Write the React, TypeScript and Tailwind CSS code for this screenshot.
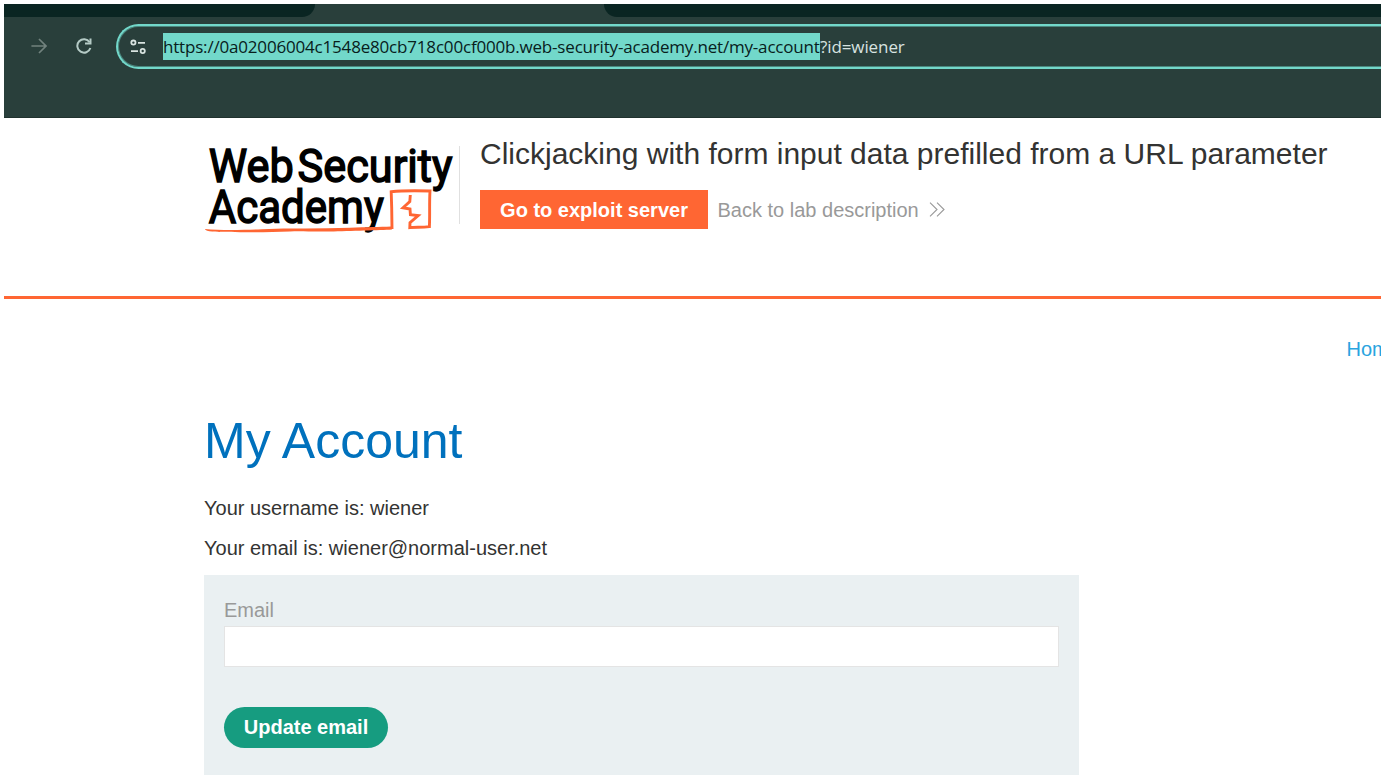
import React from "react";

function ArrowRight() {
  return (
    <svg width="16" height="16" viewBox="0 0 16 16" fill="none" stroke="#71827e" strokeWidth="1.7">
      <path d="M0.4 8H14.5M8 1L15 8L8 15" />
    </svg>
  );
}

function Reload() {
  return (
    <svg width="16" height="16" viewBox="0 0 16 16" fill="none" stroke="#b5cbc6" strokeWidth="2">
      <path d="M13.6 4.2A6.7 6.7 0 1 0 14.4 10" />
      <path d="M14.5 0.5V5.6H9" />
    </svg>
  );
}

function SiteSettings() {
  return (
    <svg width="16" height="16" viewBox="0 0 16 16" fill="none" stroke="#d8e3e0" strokeWidth="1.8">
      <circle cx="3.4" cy="3.6" r="2.1" />
      <path d="M8 3.8H15M1 12.2H8" />
      <circle cx="12.7" cy="12" r="2.1" />
    </svg>
  );
}

function Logo() {
  return (
    <svg width="256" height="96" viewBox="200 142 256 96" className="block overflow-visible">
      <g fill="#000" stroke="#000" strokeWidth="1.5" fontFamily="Roboto, sans-serif" fontWeight="400" fontSize="46">
        <text x="208.8" y="181.8" textLength="85" lengthAdjust="spacingAndGlyphs">Web</text>
        <text x="297.5" y="181.8" textLength="155" lengthAdjust="spacingAndGlyphs">Security</text>
        <text x="208.8" y="223" textLength="175" lengthAdjust="spacingAndGlyphs">Academy</text>
      </g>
      <path
        d="M204.8 229C220 230.4 245 230 262 229.2C290 228 320 229 350 227.8C366 227.2 380 227 391 226.6L392 229.4C380 230.2 350 230.8 330 231.4C312 232 304 230.8 290 231.4C262 232.6 225 232.4 212 231.6C208 231.2 205.6 230.4 204.8 229Z"
        fill="#ff6633"
      />
      <path
        d="M392 229L391.7 208L391.2 191.7C404 190.4 416 190.6 430 191C429.2 204 430 214 429.4 226.6C421 227.6 415 226.8 409.8 227.6L410 222.6L418.2 215.6L410.4 214.6L410 209L403 207.8L409.8 201.5L410.3 195"
        fill="none"
        stroke="#ff6633"
        strokeWidth="2.9"
      />
    </svg>
  );
}

function BrowserBar() {
  return (
    <div className="flex h-[114px] flex-none flex-col overflow-hidden border-b border-[#20322e] bg-[#293f3b]">
      <div className="flex h-[13px] flex-none justify-between">
        <div className="w-[311px] rounded-br-[15px] bg-[#0a2522]" />
        <div className="w-[777px] rounded-bl-[15px] bg-[#0a2522]" />
      </div>
      <div className="mt-[7px] flex h-[45px] items-center pl-[27px]">
        <div className="-mt-px flex w-[85px] items-center gap-[29px]">
          <ArrowRight />
          <Reload />
        </div>
        <div className="-mr-1 flex h-[45px] flex-1 items-center rounded-l-full border-y-2 border-l-2 border-[#72d8ca] pl-[12px] font-['Open_Sans',sans-serif] text-[17px] shadow-[inset_0_0_0_1px_#4a877e]">
          <SiteSettings />
          <div className="ml-[17px] flex h-[27px] items-center whitespace-nowrap leading-[27px]">
            <span className="w-[657px] bg-[#72d8ca] tracking-[-0.185px] text-[#08201c]">
              https://0a02006004c1548e80cb718c00cf000b.web-security-academy.net/my-account
            </span>
            <span className="tracking-[-0.1px] text-[#d8e3e0]">?id=wiener</span>
          </div>
        </div>
      </div>
    </div>
  );
}

export default function App() {
  return (
    <div className="h-[779px] w-[1385px] overflow-hidden bg-white p-1 font-['Liberation_Sans',Arial,sans-serif] text-[20px] text-[#333332]">
      <div className="flex h-[771px] flex-col overflow-hidden">
        <BrowserBar />
        <header className="flex h-[181px] flex-none border-b-[3px] border-[#ff6633] pl-[196px]">
          <div className="mt-[24px]">
            <Logo />
          </div>
          <div className="ml-[3px] mt-[28px] h-[78px] w-px bg-[#e0e0e0]" />
          <div className="ml-[20px] mt-[18px]">
            <h1 className="whitespace-nowrap text-[30px] leading-[36px]">
              Clickjacking with form input data prefilled from a URL parameter
            </h1>
            <div className="mt-[18px] flex items-center">
              <a className="flex h-[39px] w-[228px] items-center justify-center bg-[#ff6633] font-bold text-white">
                Go to exploit server
              </a>
              <a className="ml-[9.5px] flex items-center gap-[10.5px] whitespace-nowrap text-[#999999]">
                Back to lab description
                <svg width="17" height="15" viewBox="0 0 17 15" fill="none" stroke="#999" strokeWidth="1.1">
                  <path d="M1 0.7L8 7.5L1 14.3M8 0.7L15 7.5L8 14.3" />
                </svg>
              </a>
            </div>
          </div>
        </header>
        <nav className="mt-[38px] flex h-6 flex-none justify-end overflow-hidden">
          <a className="w-[34.5px] overflow-hidden text-[20px] leading-6 text-[#29a4e0]">Home</a>
        </nav>
        <main className="ml-[200px] w-[875px]">
          <h2 className="mt-[50px] text-[50px] leading-[60px] text-[#0071bd]">My Account</h2>
          <p className="mt-[25px] leading-6">Your username is: wiener</p>
          <p className="mt-4 leading-6">Your email is: wiener@normal-user.net</p>
          <form className="mt-[15px] h-[210px] bg-[#eaf0f2] px-5 pt-[23px]">
            <label className="block leading-6 text-[#999999]">Email</label>
            <input className="mt-1 block h-[41px] w-full border border-[#e4e4e4] bg-white px-2 outline-none" />
            <button
              type="button"
              className="mt-10 flex h-[41px] w-[164px] items-center justify-center rounded-full bg-[#169c80] pb-0.5 font-bold text-white"
            >
              Update email
            </button>
          </form>
        </main>
      </div>
    </div>
  );
}
